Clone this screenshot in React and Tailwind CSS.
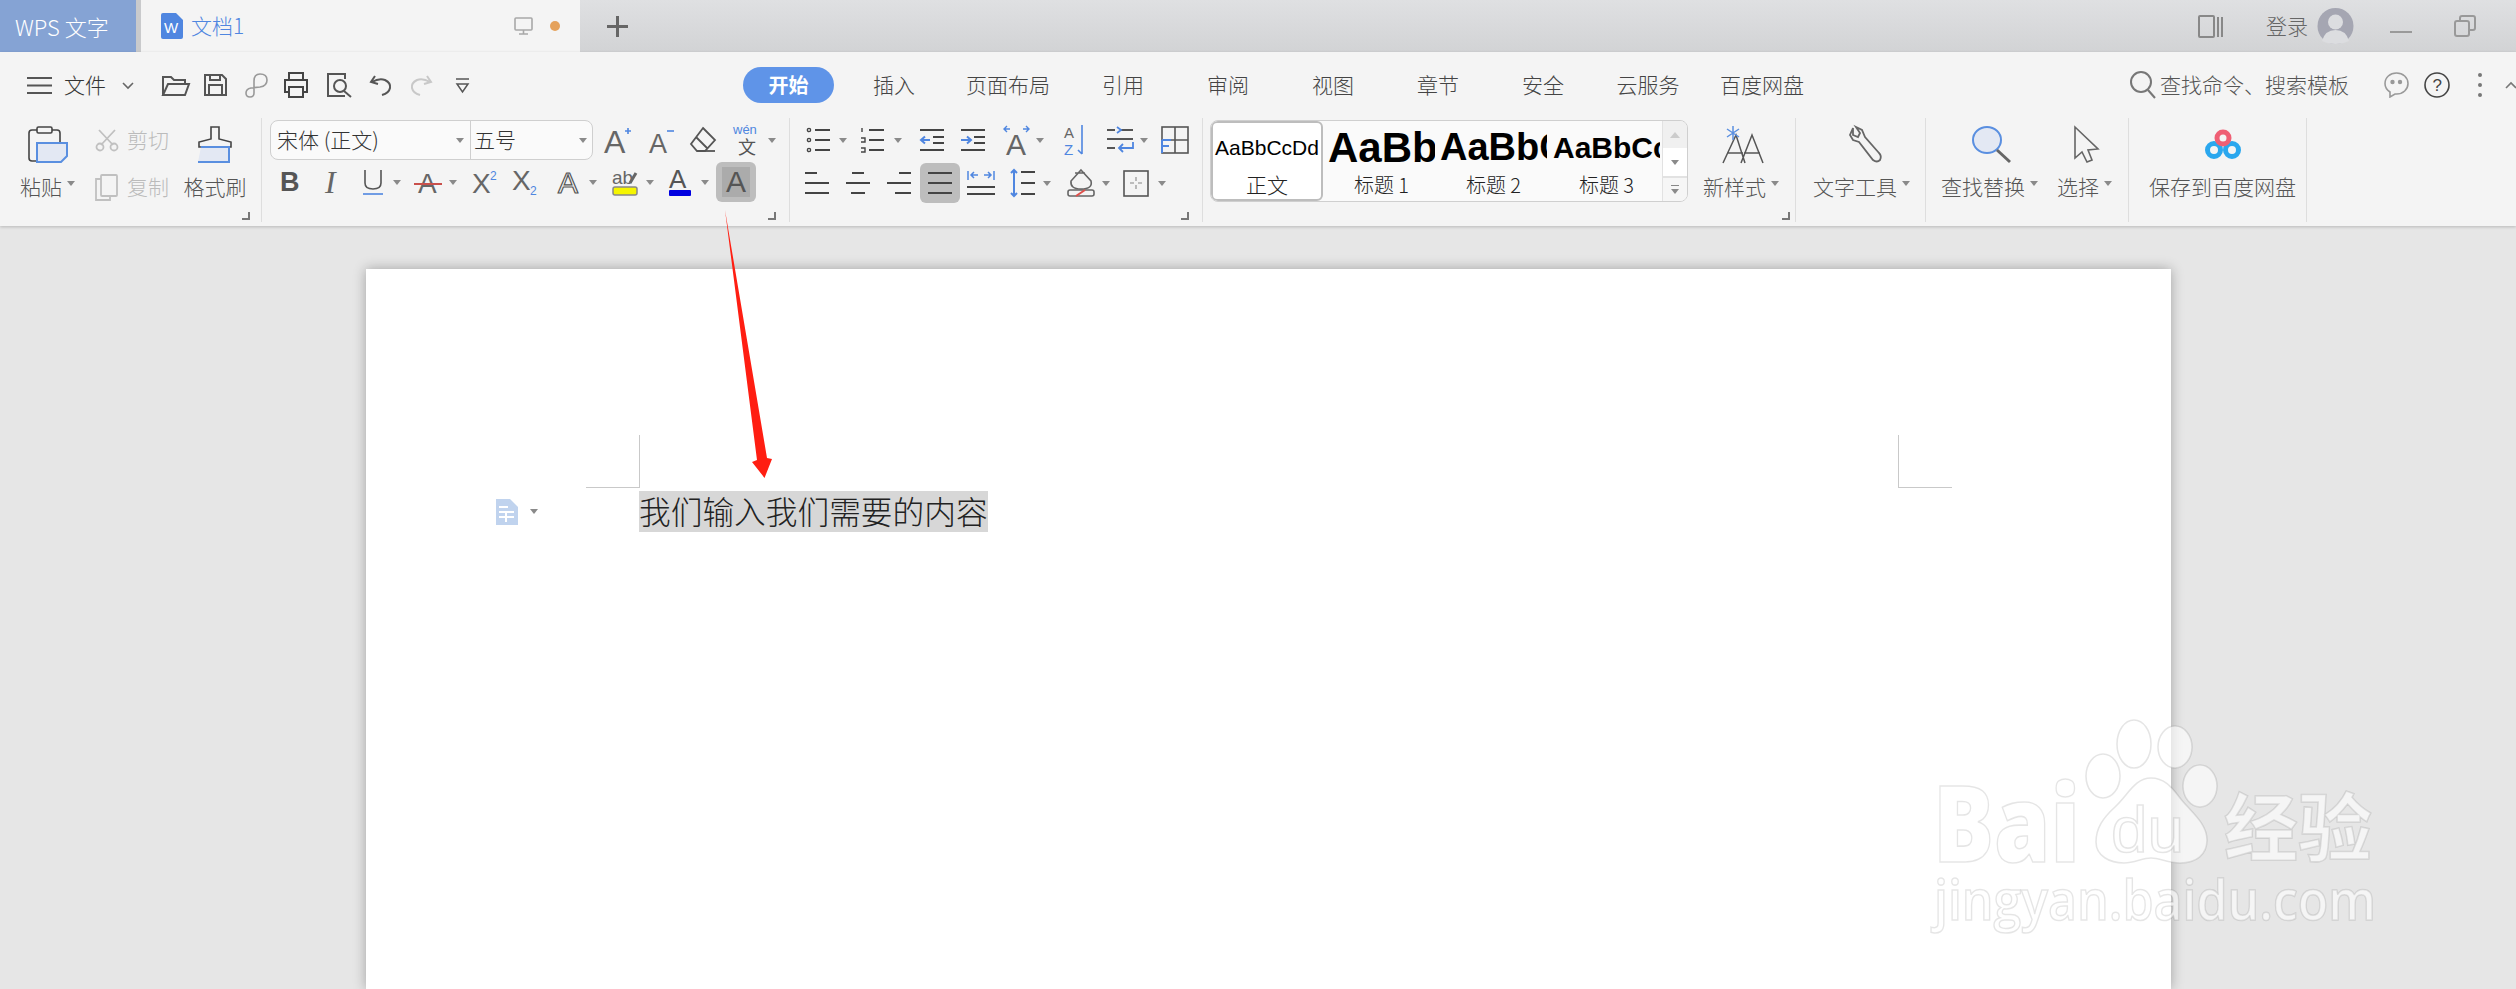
const Svg = ({ w, h, c = '#555', sw = 1.6, fill = 'none', className = '', children }) => (
  <svg width={w} height={h} viewBox={`0 0 ${w} ${h}`} fill={fill} stroke={c} strokeWidth={sw} className={`shrink-0 overflow-visible ${className}`}>
    {children}
  </svg>
);

// letters inside toolbar icons stay real text
const Lt = ({ x, y, s, f = '#555', st = 'none', sw = 0, w = 400, t }) => (
  <text x={x} y={y} fontSize={s} fontFamily="Liberation Sans, sans-serif" fontWeight={w} fill={f} stroke={st} strokeWidth={sw}>{t}</text>
);

const Caret = ({ className = '' }) => (
  <span className={`w-0 h-0 shrink-0 border-l-[4px] border-r-[4px] border-t-[5px] border-l-transparent border-r-transparent border-t-[#8a8a8a] ${className}`} />
);

const Launcher = ({ className }) => (
  <span className={`absolute w-[8px] h-[8px] border-r-2 border-b-2 border-[#777] ${className}`} />
);

const Lines = ({ w = 24, ys, xs }) => (
  <Svg w={w} h={26} sw={2} c="#444">
    {ys.map((y, i) => <path key={i} d={`M${xs[i][0]} ${y}H${xs[i][1]}`} />)}
  </Svg>
);

const ListIcon = ({ kind }) => (
  <Svg w={25} h={26} sw={2} c="#444">
    <path d="M9 3H24M9 13H24M9 23H24" />
    {kind === 'bullet'
      ? <g strokeWidth="1.4"><circle cx="3" cy="3" r="1.6" /><circle cx="3" cy="13" r="1.6" /><circle cx="3" cy="23" r="1.6" /></g>
      : <g strokeWidth="1.4"><path d="M2 1V5M1 11H5V15H1M1 21H5V25H1" /></g>}
  </Svg>
);

const IndentIcon = ({ right }) => (
  <Svg w={24} h={26} sw={2} c="#444">
    <path d="M0 3H24M0 23H24M13 10H24M13 16H24" />
    <path d={right ? 'M0 13H9M6 9.5L10 13L6 16.5' : 'M10 13H1M5 9.5L1 13L5 16.5'} stroke="#4f86e0" />
  </Svg>
);

const TitleBar = () => (
  <div className="h-[52px] flex items-stretch bg-gradient-to-b from-[#dfe0e2] to-[#d2d3d5]">
    <div className="w-[136px] bg-[#85a3d4] text-white text-[22px] font-light flex items-center pl-[15px]">WPS 文字</div>
    <div className="w-[5px] bg-[#c9cacc]" />
    <div className="w-[439px] bg-[#f4f4f4] flex items-center text-[#4f86e0] text-[21px] font-light">
      <svg width="22" height="26" viewBox="0 0 22 26" className="ml-[20px] shrink-0">
        <path d="M2 0H15L22 7V24Q22 26 20 26H2Q0 26 0 24V2Q0 0 2 0Z" fill="#4f86e0" />
        <text x="3" y="20" fontSize="15" fontFamily="Liberation Sans, sans-serif" fill="#fff">W</text>
      </svg>
      <span className="ml-[8px] w-[309px]">文档1</span>
      <Svg w={19} h={18} c="#a8a8a8" className="ml-[14px]">
        <rect x="1" y="1" width="17" height="12" rx="1" /><path d="M9.5 13V17M5 17H14" />
      </Svg>
      <span className="ml-[17px] w-[10px] h-[10px] rounded-full bg-[#e5a25c]" />
    </div>
    <div className="flex items-center ml-[27px]">
      <Svg w={21} h={21} sw={3} c="#666"><path d="M10.5 0V21M0 10.5H21" /></Svg>
    </div>
    <div className="flex-1 flex items-center justify-end pr-[40px] text-[21px] font-light text-[#666]">
      <Svg w={25} h={25} c="#888" sw={2}><rect x="1" y="2" width="15" height="21" rx="1" /><path d="M20 3V23M24 3V23" /></Svg>
      <span className="ml-[43px] w-[42px] whitespace-nowrap">登录</span>
      <svg width="37" height="36" viewBox="0 0 37 36" className="ml-[9px] shrink-0">
        <circle cx="18.5" cy="18" r="18" fill="#a5a6b2" />
        <circle cx="18.5" cy="14" r="7.5" fill="#dcdde0" />
        <path d="M5 33Q8 22 18.5 22Q29 22 32 33Q26 36 18.5 36Q11 36 5 33Z" fill="#dcdde0" />
      </svg>
      <span className="ml-[36px] mt-[12px] w-[22px] h-[2px] bg-[#9a9a9a]" />
      <Svg w={22} h={22} c="#999" sw={2} className="ml-[42px]">
        <rect x="1" y="6" width="14" height="15" rx="2" /><path d="M6 6V3Q6 1 8 1H19Q21 1 21 3V13Q21 15 19 15H15" />
      </Svg>
    </div>
  </div>
);

const tabs = [
  ['插入', 'w-[120px]'], ['页面布局', 'w-[108px]'], ['引用', 'w-[122px]'], ['审阅', 'w-[88px]'],
  ['视图', 'w-[122px]'], ['章节', 'w-[88px]'], ['安全', 'w-[122px]'], ['云服务', 'w-[88px]'], ['百度网盘', 'w-[140px]'],
];

const TabRow = () => (
  <div className="h-[66px] flex items-center text-[21px] font-light text-[#444]">
    <Svg w={25} h={17} c="#555" sw={2} className="ml-[27px]"><path d="M0 1H25M0 8.5H25M0 16H25" /></Svg>
    <span className="ml-[12px] w-[43px] text-[#333]">文件</span>
    <Svg w={12} h={7} c="#666" className="ml-[15px]"><path d="M1 1L6 6L11 1" /></Svg>
    <Svg w={29} h={21} c="#555" sw={2} className="ml-[27px]"><path d="M2 20V2H10L13 5H24V9M2 20H24L28 9H7L2 20Z" /></Svg>
    <Svg w={23} h={22} c="#555" sw={2} className="ml-[14px]"><path d="M1 1H18L22 5V21H1ZM6 1V6H16V1M5 21V11H18V21" /></Svg>
    <Svg w={23} h={25} c="#999" sw={1.6} className="ml-[18px]"><path d="M9 8Q9 1 15 1Q22 1 22 7Q22 13 15 14L6 15Q1 16 1 20Q1 24 5 24Q9 24 9 20V8" /></Svg>
    <Svg w={24} h={26} c="#444" sw={2} className="ml-[16px]"><path d="M5 8V1H19V8M5 20H1V8H23V20H19M5 15H19V25H5Z" /></Svg>
    <Svg w={26} h={24} c="#555" sw={2} className="ml-[19px]"><path d="M18 23H1V1H18V6" /><circle cx="13" cy="13" r="6" /><path d="M17 18L24 24" /></Svg>
    <Svg w={22} h={21} c="#555" sw={2} className="ml-[17px]"><path d="M5 1L1 7L8 9M2 7Q9 3 15 5Q21 8 20 13Q19 18 12 20" /></Svg>
    <Svg w={22} h={21} c="#c8c8c8" sw={2} className="ml-[18px]"><path d="M17 1L21 7L14 9M20 7Q13 3 7 5Q1 8 2 13Q3 18 10 20" /></Svg>
    <Svg w={15} h={15} c="#555" sw={1.5} className="ml-[23px]"><path d="M1 1H14M2 6H13L7.5 14Z" /></Svg>
    <div className="ml-[273px] w-[91px] h-[36px] rounded-full bg-[#5f94e8] text-white text-[20px] font-bold flex items-center justify-center">开始</div>
    {tabs.map(([name, width]) => (
      <span key={name} className={`${width} text-center whitespace-nowrap`}>{name}</span>
    ))}
    <Svg w={26} h={28} c="#777" sw={2} className="ml-[298px]"><circle cx="11" cy="11" r="10" /><path d="M18 19L25 27" /></Svg>
    <span className="ml-[4px] w-[190px] whitespace-nowrap text-[#555]">查找命令、搜索模板</span>
    <svg width="25" height="26" viewBox="0 0 25 26" fill="none" stroke="#999" strokeWidth="1.6" className="ml-[34px] shrink-0">
      <path d="M12.5 1C6 1 1 5.5 1 11.5C1 15 3 18 6 20V25L11 22H12.5C19 22 24 17.5 24 11.5C24 5.5 19 1 12.5 1Z" />
      <circle cx="8.5" cy="10" r="1.4" fill="#999" /><circle cx="16" cy="10" r="1.4" fill="#999" />
    </svg>
    <svg width="26" height="26" viewBox="0 0 26 26" fill="none" stroke="#444" strokeWidth="1.6" className="ml-[15px] shrink-0">
      <circle cx="13" cy="13" r="12" />
      <text x="8.5" y="19" fontSize="17" fontFamily="Liberation Sans, sans-serif" fill="#444" stroke="none">?</text>
    </svg>
    <div className="ml-[28px] flex flex-col gap-[6px]">
      <span className="w-[4px] h-[4px] rounded-full bg-[#777]" />
      <span className="w-[4px] h-[4px] rounded-full bg-[#777]" />
      <span className="w-[4px] h-[4px] rounded-full bg-[#777]" />
    </div>
    <Svg w={10} h={7} c="#777" className="ml-[24px]"><path d="M0 6L5 1L10 6" /></Svg>
  </div>
);

const BigBtn = ({ icon, label, caret, width, iconClass = '' }) => (
  <div className={`flex flex-col items-center ${width}`}>
    <div className={`h-[37px] flex items-end ${iconClass}`}>{icon}</div>
    <div className="mt-[9px] h-[30px] flex items-center text-[21px] font-light text-[#555] whitespace-nowrap">
      {label}
      {caret && <Caret className="ml-[5px] mb-[8px]" />}
    </div>
  </div>
);

const ClipGroup = () => (
  <div className="relative w-[262px] h-[104px] border-r border-[#dedede] pt-[8px] flex shrink-0">
    <BigBtn
      width="ml-[20px] w-[56px] items-start"
      label="粘贴"
      caret
      iconClass="ml-[8px]"
      icon={
        <Svg w={40} h={37} c="#444" sw={1.6}>
          <rect x="1" y="4" width="31" height="31" rx="3" />
          <rect x="9" y="1" width="15" height="6" rx="1.5" fill="#f4f4f4" />
          <path d="M9 17H39V30L33 36H9Z" fill="#e3e8f3" stroke="#5a8fe0" strokeWidth="2" />
        </Svg>
      }
    />
    <div className="ml-[19px] w-[74px] text-[21px] font-light text-[#bbb]">
      <div className="h-[28px] flex items-center mt-[0px]">
        <Svg w={24} h={22} c="#c0c0c0" sw={1.8}>
          <path d="M4 1L18 16M20 1L6 16" /><circle cx="5" cy="18" r="3.5" /><circle cx="19" cy="18" r="3.5" />
        </Svg>
        <span className="ml-[8px]">剪切</span>
      </div>
      <div className="h-[30px] mt-[18px] flex items-center">
        <Svg w={23} h={27} c="#c0c0c0" sw={1.8}>
          <rect x="6" y="1" width="16" height="21" rx="1" /><path d="M6 5H1V26H15V22" />
        </Svg>
        <span className="ml-[9px]">复制</span>
      </div>
    </div>
    <BigBtn
      width="ml-[15px] w-[62px]"
      label="格式刷"
      icon={
        <Svg w={36} h={37} c="#444" sw={1.6}>
          <path d="M14 1H22V13L34 16V21H2V16L14 13Z" />
          <path d="M4 21H32V36H1" fill="#e3e8f3" stroke="#5a8fe0" strokeWidth="2" />
        </Svg>
      }
    />
    <Launcher className="left-[242px] top-[94px]" />
  </div>
);

const FontGroup = () => (
  <div className="relative w-[528px] h-[104px] border-r border-[#dedede] pt-[2px] shrink-0">
    <div className="h-[40px] flex items-center">
      <div className="ml-[8px] w-[323px] h-[40px] rounded-[8px] border border-[#cfcfcf] bg-[#fafafa] flex items-center text-[21px] font-light text-[#333] overflow-hidden">
        <span className="ml-[6px] w-[170px] whitespace-nowrap">宋体 (正文)</span>
        <Caret className="ml-[9px]" />
        <span className="ml-[6px] h-full border-l border-[#cfcfcf] pl-[3px] w-[120px] flex items-center">五号<Caret className="ml-[63px]" /></span>
      </div>
      <Svg w={27} h={30} c="#555" className="ml-[11px]">
        <Lt x={0} y={28} s={32} t="A" f="#666" /><path d="M21 6H27M24 3V9" stroke="#4f86e0" />
      </Svg>
      <Svg w={25} h={30} c="#555" className="ml-[18px]">
        <Lt x={0} y={28} s={27} t="A" f="#666" /><path d="M18 6H25" stroke="#4f86e0" />
      </Svg>
      <Svg w={28} h={28} c="#555" sw={1.8} className="ml-[15px]">
        <path d="M14 2L26 14L16 25H8L2 18ZM7 11L18 22" /><path d="M9 25H26" />
      </Svg>
      <svg width="28" height="34" viewBox="0 0 28 34" className="ml-[16px] shrink-0 overflow-visible">
        <text x="0" y="11" fontSize="13" fontFamily="Liberation Sans, sans-serif" fill="#4f86e0">wén</text>
        <text x="5" y="31" fontSize="18" fontFamily="Noto Sans CJK SC, sans-serif" fill="#555">文</text>
      </svg>
      <Caret className="ml-[7px]" />
    </div>
    <div className="mt-[2px] h-[40px] flex items-center">
      <Svg w={18} h={24} sw={0} className="ml-[19px]"><Lt x={-1} y={21} s={27} w={700} t="B" f="#555" /></Svg>
      <Svg w={13} h={26} sw={0} className="ml-[26px]"><text x="0" y="24" fontSize="32" fontStyle="italic" fontFamily="Liberation Serif, serif" fill="#666">I</text></Svg>
      <Svg w={20} h={27} c="#4f86e0" sw={1.6} className="ml-[25px]"><path d="M2 1V14Q2 20 10 20Q18 20 18 14V1" stroke="#555" /><path d="M0 25H20" /></Svg>
      <Caret className="ml-[10px]" />
      <Svg w={28} h={26} sw={2} c="#c9504b" className="ml-[13px]"><Lt x={4} y={24} s={28} t="A" f="#666" /><path d="M0 15H28" /></Svg>
      <Caret className="ml-[7px]" />
      <Svg w={26} h={26} sw={0} className="ml-[15px]"><Lt x={0} y={24} s={28} t="X" f="#666" /><Lt x={18} y={11} s={12} t="2" f="#4f86e0" /></Svg>
      <Svg w={26} h={26} sw={0} className="ml-[14px]"><Lt x={0} y={21} s={28} t="X" f="#666" /><Lt x={18} y={26} s={12} t="2" f="#4f86e0" /></Svg>
      <Svg w={26} h={26} sw={0} className="ml-[19px]"><Lt x={1} y={24} s={30} t="A" f="#f4f4f4" st="#555" sw={1.2} /></Svg>
      <Caret className="ml-[6px]" />
      <Svg w={26} h={30} c="#666" sw={1.5} className="ml-[15px]">
        <Lt x={0} y={17} s={19} t="ab" f="#666" /><path d="M18 16L24 6" strokeWidth="3" />
        <rect x="1" y="20" width="24" height="8" rx="2" fill="#f5f500" stroke="#888" />
      </Svg>
      <Caret className="ml-[8px]" />
      <Svg w={24} h={28} c="#0000e0" sw={0} className="ml-[14px]">
        <Lt x={1} y={20} s={26} t="A" f="#555" /><rect x="1" y="22" width="22" height="6" rx="1" fill="#0000e0" />
      </Svg>
      <Caret className="ml-[9px]" />
      <div className="ml-[7px] w-[40px] h-[40px] rounded-[6px] bg-[#bdbdbd] flex items-center justify-center">
        <div className="w-[28px] h-[30px] bg-[#ababab] flex items-center justify-center font-['Liberation_Sans',sans-serif] text-[30px] leading-none text-[#555]">A</div>
      </div>
    </div>
    <Launcher className="left-[506px] top-[94px]" />
  </div>
);

const ParaGroup = () => (
  <div className="relative w-[413px] h-[104px] border-r border-[#dedede] pt-[2px] shrink-0">
    <div className="h-[40px] flex items-center">
      <span className="ml-[16px]"><ListIcon kind="bullet" /></span>
      <Caret className="ml-[8px]" />
      <span className="ml-[13px]"><ListIcon kind="number" /></span>
      <Caret className="ml-[9px]" />
      <span className="ml-[18px]"><IndentIcon /></span>
      <span className="ml-[17px]"><IndentIcon right /></span>
      <Svg w={27} h={32} c="#4f86e0" sw={1.4} className="ml-[18px]">
        <Lt x={3} y={31} s={30} t="A" f="#666" /><path d="M1 5H7M4 2L1 5L4 8M26 5H20M23 2L26 5L23 8" />
      </Svg>
      <Caret className="ml-[6px]" />
      <Svg w={25} h={32} sw={0} className="ml-[20px]">
        <Lt x={0} y={14} s={15} t="A" f="#666" /><Lt x={0} y={31} s={15} t="Z" f="#4f86e0" />
        <path d="M18 1V30M14 26L18 30" stroke="#4f86e0" strokeWidth="1.6" />
      </Svg>
      <Svg w={26} h={28} c="#555" sw={1.8} className="ml-[18px]">
        <path d="M0 4H8M14 4H26M0 13H26M0 22H8" /><path d="M10 1L14 4L10 7M26 16V22H12M16 18L12 22L16 26" stroke="#4f86e0" />
      </Svg>
      <Caret className="ml-[7px]" />
      <Svg w={28} h={28} c="#555" sw={1.6} className="ml-[13px]">
        <rect x="1" y="1" width="26" height="26" /><path d="M14 1V27M1 14H27" />
        <path d="M1 14V27M1 14H10M1 20H8" stroke="#4f86e0" strokeWidth="2" />
      </Svg>
    </div>
    <div className="mt-[3px] h-[40px] flex items-center">
      <span className="ml-[15px]"><Lines ys={[3, 13, 23]} xs={[[0, 12], [0, 24], [0, 24]]} /></span>
      <span className="ml-[17px]"><Lines ys={[3, 13, 23]} xs={[[6, 18], [0, 24], [5, 19]]} /></span>
      <span className="ml-[17px]"><Lines ys={[3, 13, 23]} xs={[[12, 24], [0, 24], [8, 24]]} /></span>
      <div className="ml-[9px] w-[40px] h-[40px] rounded-[6px] bg-[#bdbdbd] flex items-center justify-center">
        <Lines ys={[3, 13, 23]} xs={[[0, 24], [0, 24], [0, 24]]} />
      </div>
      <Svg w={28} h={26} c="#444" sw={2} className="ml-[7px]">
        <path d="M0 17H28M0 24H28" /><path d="M1 1V10M27 1V10M4 5H11M24 5H17M7 2L4 5L7 8M21 2L24 5L21 8" stroke="#4f86e0" strokeWidth="1.5" />
      </Svg>
      <Svg w={25} h={28} c="#444" sw={2} className="ml-[15px]">
        <path d="M11 3H25M11 14H25M11 25H25" /><path d="M4 1V27M1 4L4 1L7 4M1 24L4 27L7 24" stroke="#4f86e0" />
      </Svg>
      <Caret className="ml-[8px]" />
      <Svg w={28} h={28} c="#666" sw={1.6} className="ml-[16px]">
        <path d="M14 1L24 12Q26 20 14 20Q3 20 4 12ZM8 4H18" /><rect x="1" y="21" width="26" height="6" rx="2" /><path d="M9 27L18 21" stroke="#e0504b" strokeWidth="2" />
      </Svg>
      <Caret className="ml-[7px]" />
      <Svg w={26} h={27} c="#555" sw={1.6} className="ml-[13px]">
        <rect x="1" y="1" width="24" height="25" /><path d="M13 7V11M13 15V19M7 13H11M15 13H19" stroke="#aaa" />
      </Svg>
      <Caret className="ml-[9px]" />
    </div>
    <Launcher className="left-[391px] top-[94px]" />
  </div>
);

const styleCells = [
  ['标题 1', 'text-[42px]', 'w-[107px] ml-[5px]'],
  ['标题 2', 'text-[38px]', 'w-[107px] ml-[5px]'],
  ['标题 3', 'text-[30px]', 'w-[107px] ml-[6px]'],
];

const StyleGroup = () => (
  <div className="relative w-[593px] h-[104px] border-r border-[#dedede] pt-[2px] flex shrink-0">
    <div className="ml-[7px] w-[478px] h-[82px] rounded-[8px] border border-[#cfcfcf] bg-[#fafafa] flex overflow-hidden">
      <div className="w-[112px] border-2 border-[#bdbdbd] rounded-[6px] bg-white flex flex-col items-center shrink-0">
        <div className="h-[42px] flex items-end font-['Liberation_Sans',sans-serif] text-[21px] leading-[32px] text-black">AaBbCcDd</div>
        <div className="mt-[5px] text-[21px] font-light leading-[30px] text-[#222]">正文</div>
      </div>
      {styleCells.map(([label, size, box]) => (
        <div key={label} className={`${box} flex flex-col items-center shrink-0`}>
          <div className={`h-[52px] w-full overflow-hidden flex items-center font-['Liberation_Sans',sans-serif] font-bold whitespace-nowrap text-black ${size}`}>AaBbCcDd</div>
          <div className="-mt-[3px] text-[20px] font-light leading-[30px] text-[#222]">{label}</div>
        </div>
      ))}
      <div className="ml-[2px] flex-1 border-l border-[#e2e2e2] flex flex-col">
        <div className="h-[27px] bg-[#f0f0f0] flex items-center justify-center"><span className="w-0 h-0 border-l-[5px] border-r-[5px] border-b-[6px] border-l-transparent border-r-transparent border-b-[#ccc]" /></div>
        <div className="h-[28px] bg-white flex items-center justify-center"><Caret /></div>
        <div className="flex-1 bg-[#f6f6f6] border-t-2 border-[#e2e2e2] flex flex-col items-center justify-center gap-[3px]">
          <span className="w-[8px] h-[1px] bg-[#888]" /><Caret />
        </div>
      </div>
    </div>
    <div className="ml-[15px] pt-[6px]">
      <BigBtn
        width="items-start"
        label="新样式"
        caret
        iconClass="ml-[19px]"
        icon={
          <Svg w={42} h={38} c="#555" sw={1.5}>
            <path d="M1 38L14 10L23 38M5 28H21M19 38L30 10L41 38M22 28H38" />
            <path d="M11 1V15M5 4L17 12M17 4L5 12" stroke="#5a8fe0" />
          </Svg>
        }
      />
    </div>
    <Launcher className="left-[579px] top-[94px]" />
  </div>
);

const ToolGroups = () => (
  <>
    <div className="w-[130px] h-[104px] border-r border-[#dedede] pt-[8px] pl-[17px] shrink-0">
      <BigBtn
        width="items-start"
        label="文字工具"
        caret
        iconClass="ml-[32px]"
        icon={
          <Svg w={38} h={36} c="#666" sw={1.8}>
            <path d="M8 1L5 8L8 13L14 15L28 33Q32 36 35 33Q37 29 34 26L20 10L17 3L11 0L15 6L13 10L8 8Z" />
          </Svg>
        }
      />
    </div>
    <div className="w-[203px] h-[104px] border-r border-[#dedede] pt-[8px] pl-[15px] flex shrink-0">
      <BigBtn
        width="items-start"
        label="查找替换"
        caret
        iconClass="ml-[31px]"
        icon={
          <Svg w={40} h={37} c="#5a8fe0" sw={2}>
            <ellipse cx="15" cy="14" rx="14" ry="13" fill="#e3e8f3" />
            <path d="M25 24L38 36" stroke="#666" strokeWidth="3" />
          </Svg>
        }
      />
      <div className="ml-[19px]">
        <BigBtn
          width="items-start"
          label="选择"
          caret
          iconClass="ml-[16px]"
          icon={
            <Svg w={27} h={37} c="#666" sw={1.6}>
              <path d="M2 1V32L9 26L14 36L19 34L15 24L25 23Z" />
            </Svg>
          }
        />
      </div>
    </div>
    <div className="w-[178px] h-[104px] border-r border-[#dedede] pt-[8px] pl-[10px] shrink-0">
      <BigBtn
        width="items-center"
        label="保存到百度网盘"
        iconClass="pb-[4px]"
        icon={
          <svg width="36" height="30" viewBox="0 0 36 30" fill="none" strokeWidth="5" className="shrink-0">
            <circle cx="9" cy="21" r="6.5" stroke="#2aa7ee" />
            <circle cx="27" cy="21" r="6.5" stroke="#2aa7ee" />
            <circle cx="18" cy="9" r="6" stroke="#ef5f74" />
          </svg>
        }
      />
    </div>
  </>
);

const Page = () => (
  <div className="ml-[366px] w-[1805px] h-[720px] bg-white shadow-[0_0_12px_rgba(0,0,0,0.3)] pt-[166px]">
    <div className="flex justify-between pl-[220px] pr-[219px]">
      <div className="w-[54px] h-[53px] border-r border-b border-[#c9c9c9]" />
      <div className="w-[54px] h-[53px] border-l border-b border-[#c9c9c9]" />
    </div>
    <div className="mt-[3px] pl-[130px] flex items-center">
      <svg width="22" height="26" viewBox="0 0 22 26" className="shrink-0">
        <path d="M0 0H14L22 8V26H0Z" fill="#c0d3ee" />
        <path d="M3 8H12M3 13H18M10 13V23M3 18H18" stroke="#fff" strokeWidth="2" fill="none" />
      </svg>
      <Caret className="ml-[12px]" />
      <span className="ml-[101px] w-[349px] h-[41px] leading-[38px] bg-[#d7d7d7] text-[31.7px] font-light text-[#222] whitespace-nowrap">我们输入我们需要的内容</span>
    </div>
  </div>
);

// red pointer drawn over the ribbon and the page
const Pointer = () => (
  <svg width="2516" height="989" viewBox="0 0 2516 989" className="absolute left-0 top-0 pointer-events-none">
    <path d="M725 210L767 458L772 459L764.5 478L752 462L757 460Z" fill="#ff1e12" />
  </svg>
);

const Watermark = () => (
  <svg
    width="2516"
    height="989"
    viewBox="0 0 2516 989"
    fill="rgba(255,255,255,0.6)"
    stroke="rgba(0,0,0,0.1)"
    strokeWidth="1.6"
    className="absolute left-0 top-0 pointer-events-none blur-[0.5px]"
  >
    <text x="1933" y="862" fontSize="106" fontWeight="800" fontFamily="Open Sans, sans-serif" textLength="147" lengthAdjust="spacingAndGlyphs">Bai</text>
    <ellipse cx="2103" cy="776" rx="17" ry="22" />
    <ellipse cx="2134" cy="744" rx="17" ry="24" />
    <ellipse cx="2175" cy="747" rx="17" ry="21" />
    <ellipse cx="2200" cy="786" rx="17" ry="21" />
    <path d="M2151 778C2135 778 2128 795 2115 807C2103 818 2096 828 2096 842C2096 856 2110 863 2124 863C2135 863 2142 858 2151 858C2160 858 2168 863 2180 863C2196 863 2207 855 2207 840C2207 826 2196 816 2186 805C2175 793 2168 778 2151 778Z" />
    <text x="2111" y="852" fontSize="64" fontFamily="Liberation Sans, sans-serif" textLength="73" lengthAdjust="spacingAndGlyphs">du</text>
    <text x="2224" y="855" fontSize="74" fontWeight="700" fontFamily="Noto Sans CJK SC, sans-serif" textLength="148" lengthAdjust="spacingAndGlyphs">经验</text>
    <text x="1934" y="920" fontSize="56" fontWeight="600" fontFamily="Open Sans, sans-serif" textLength="442" lengthAdjust="spacingAndGlyphs">jingyan.baidu.com</text>
  </svg>
);

export default function App() {
  return (
    <div className="relative w-[2516px] h-[989px] overflow-hidden bg-[#e6e6e6] font-['Noto_Sans_CJK_SC',sans-serif]">
      <TitleBar />
      <div className="h-[174px] bg-[#f4f4f4] shadow-[0_1px_3px_rgba(0,0,0,0.2)] relative">
        <TabRow />
        <div className="flex">
          <ClipGroup />
          <FontGroup />
          <ParaGroup />
          <StyleGroup />
          <ToolGroups />
        </div>
      </div>
      <div className="pt-[43px]">
        <Page />
      </div>
      <Watermark />
      <Pointer />
    </div>
  );
}
